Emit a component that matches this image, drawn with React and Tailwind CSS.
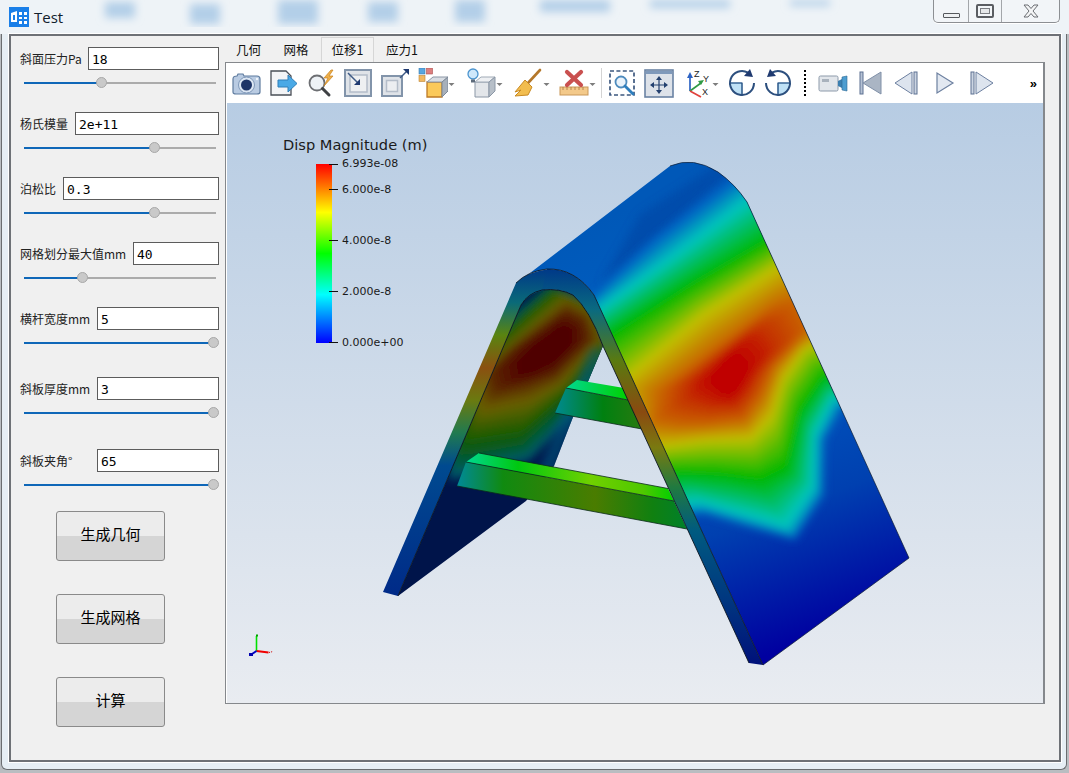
import React from 'react';

const sliders = [
  { label: '斜面压力Pa', value: '18', input: 'w-[131px]', fill: 'w-[77px]', mt: 'mt-[11px]' },
  { label: '杨氏模量', value: '2e+11', input: 'w-[144px]', fill: 'w-[130px]', mt: 'mt-[24px]' },
  { label: '泊松比', value: '0.3', input: 'w-[156px]', fill: 'w-[130px]', mt: 'mt-[24px]' },
  { label: '网格划分最大值mm', value: '40', input: 'w-[86px]', fill: 'w-[58px]', mt: 'mt-[24px]' },
  { label: '横杆宽度mm', value: '5', input: 'w-[122px]', fill: 'w-[189px]', mt: 'mt-[24px]' },
  { label: '斜板厚度mm', value: '3', input: 'w-[122px]', fill: 'w-[189px]', mt: 'mt-[29px]' },
  { label: '斜板夹角°', value: '65', input: 'w-[122px]', fill: 'w-[189px]', mt: 'mt-[31px]' },
];

// contour polygons of the displacement field, outermost first; same point count so they can be blended
const outerContours = [
  { color: [0, 96, 196], pts: [[575, 312], [655, 238], [728, 182], [790, 150], [905, 395], [845, 405], [825, 440], [824, 495], [795, 540], [752, 528], [705, 514], [650, 520]] },
  { color: [0, 196, 188], pts: [[580, 322], [672, 255], [742, 202], [790, 170], [890, 410], [833, 400], [815, 437], [814, 488], [787, 528], [752, 518], [700, 503], [650, 510]] },
  { color: [0, 184, 0], pts: [[590, 345], [690, 283], [763, 241], [800, 220], [870, 395], [826, 376], [801, 413], [787, 471], [760, 482], [721, 476], [682, 474], [640, 480]] },
  { color: [192, 192, 0], pts: [[615, 385], [703, 312], [777, 265], [810, 245], [840, 335], [805, 349], [784, 380], [773, 417], [752, 440], [703, 442], [668, 447], [630, 450]] },
  { color: [200, 96, 0], pts: [[660, 390], [720, 345], [775, 305], [795, 300], [810, 325], [795, 345], [775, 365], [762, 395], [745, 420], [705, 425], [680, 425], [655, 420]] },
  { color: [192, 0, 0], pts: [[710, 375], [722, 360], [731, 350], [740, 354], [750, 364], [748, 372], [744, 382], [738, 390], [730, 396], [722, 394], [716, 388], [710, 382]] },
];

const innerContours = [
  { color: [0, 90, 112], pts: [[505, 320], [550, 283], [600, 300], [615, 350], [580, 410], [530, 460], [450, 480], [440, 400]] },
  { color: [10, 90, 8], pts: [[505, 330], [552, 288], [595, 305], [606, 350], [570, 395], [520, 440], [462, 448], [455, 390]] },
  { color: [106, 96, 0], pts: [[500, 355], [566, 298], [590, 310], [603, 338], [560, 385], [530, 402], [482, 412], [470, 385]] },
  { color: [90, 38, 0], pts: [[515, 345], [566, 310], [585, 320], [590, 340], [555, 375], [525, 385], [495, 392], [490, 370]] },
  { color: [80, 0, 0], pts: [[535, 345], [560, 325], [572, 330], [570, 345], [555, 362], [535, 372], [522, 375], [520, 360]] },
];

const blendContours = (levels, steps) => {
  const out = [];
  for (let i = 0; i < levels.length - 1; i++) {
    for (let s = 0; s < steps; s++) {
      const t = s / steps;
      const mix = (a, b) => a + (b - a) * t;
      const d = levels[i].pts.map((p, k) => `${mix(p[0], levels[i + 1].pts[k][0]).toFixed(1)} ${mix(p[1], levels[i + 1].pts[k][1]).toFixed(1)}`).join('L');
      const c = levels[i].color.map((v, k) => Math.round(mix(v, levels[i + 1].color[k])));
      out.push({ d: `M${d}z`, fill: `rgb(${c.join(',')})` });
    }
  }
  const last = levels[levels.length - 1];
  out.push({ d: `M${last.pts.map(p => p.join(' ')).join('L')}z`, fill: `rgb(${last.color.join(',')})` });
  return out;
};

const ContourFill = ({ levels, filter }) => (
  <g filter={filter}>
    {blendContours(levels, 8).map((l, i) => <path key={i} d={l.d} fill={l.fill} />)}
  </g>
);

const Drop = () => (
  <svg className="w-[7px] h-[30px] shrink-0" viewBox="0 0 7 30"><path d="M0.5 15h6l-3 3z" fill="#7d7d7d" /></svg>
);

const Icon = ({ children }) => (
  <svg className="w-[30px] h-[30px] shrink-0" viewBox="0 0 30 30">{children}</svg>
);

const ToolBtn = ({ w, drop, children }) => (
  <div className={`flex items-center justify-center shrink-0 h-full ${w}`}>
    <Icon>{children}</Icon>
    {drop && <Drop />}
  </div>
);

const Toolbar = () => (
  <div className="h-[40px] flex items-center bg-white pl-[1px]">
    <ToolBtn w="w-[37px]">
      <path d="M5 8l1-2h5l1 2h13q3 0 3 3v13q0 2-3 2H4q-3 0-3-2V11q0-3 4-3z" fill="#b9cbe2" stroke="#5f7c9f" strokeWidth="1.2" />
      <circle cx="14.5" cy="17" r="8" fill="#dbe6f3" stroke="#7f98b8" />
      <circle cx="14.5" cy="17" r="5.5" fill="#1d3568" />
      <circle cx="25" cy="11" r="1.2" fill="#eef4fa" />
    </ToolBtn>
    <ToolBtn w="w-[37px]">
      <path d="M2 3h15l5 5v19H2z" fill="#f3f4f6" stroke="#4a4f57" strokeWidth="1.3" />
      <path d="M9 12h10V7l9 8.5-9 8.5v-5H9z" fill="#4aa9e6" stroke="#2f7fb8" />
    </ToolBtn>
    <ToolBtn w="w-[37px]">
      <circle cx="11" cy="15" r="7.5" fill="#eef2f6" stroke="#6d6f73" strokeWidth="1.8" />
      <path d="M16.5 20.5l6.5 6.5" stroke="#3f4144" strokeWidth="3" strokeLinecap="round" />
      <path d="M25 2l-7 8h4l-4 8 9-10h-4l4-6z" fill="#efb04a" stroke="#c5801c" strokeWidth="0.7" />
    </ToolBtn>
    <ToolBtn w="w-[37px]">
      <rect x="2" y="2" width="26" height="26" fill="#dfe3e8" stroke="#8294aa" strokeWidth="2" />
      <rect x="7" y="7" width="17" height="17" fill="#eef0f2" stroke="#b4bdc9" strokeWidth="1.5" />
      <path d="M5 5l10 10" stroke="#3e5a86" strokeWidth="1.5" />
      <path d="M17 17v-6l-6 6z" fill="#1f3a70" />
    </ToolBtn>
    <ToolBtn w="w-[37px]">
      <rect x="2" y="8" width="20" height="20" fill="#dfe3e8" stroke="#8294aa" strokeWidth="2" />
      <rect x="6.5" y="12.5" width="11" height="11" fill="#eceef1" stroke="#b4bdc9" strokeWidth="1.5" />
      <path d="M20 10l7-7" stroke="#3e5a86" strokeWidth="1.5" />
      <path d="M29 1v6l-6-6z" fill="#1f3a70" />
    </ToolBtn>
    <ToolBtn w="w-[47px]" drop>
      <rect x="1" y="0" width="6" height="6" fill="#58a6e0" stroke="#3c7db0" strokeWidth="0.6" />
      <rect x="8.5" y="0" width="6" height="6" fill="#dc7f7f" stroke="#aa4f4f" strokeWidth="0.6" />
      <rect x="1" y="7.5" width="6" height="6" fill="#f2b860" stroke="#bc8434" strokeWidth="0.6" />
      <path d="M9 14h15v15H9z" fill="#fbc95a" stroke="#bd7a26" strokeWidth="1.3" />
      <path d="M9 14l6-5h15l-6 5z" fill="#d8dde3" stroke="#8b97a6" />
      <path d="M24 14l6-5v14l-6 6z" fill="#a7b0bb" stroke="#7d8998" />
    </ToolBtn>
    <ToolBtn w="w-[48px]" drop>
      <circle cx="7" cy="6" r="5" fill="#cfe8fb" stroke="#4b94cf" strokeWidth="1.3" />
      <path d="M5 11.5h4v3H5z" fill="#5e6c7c" />
      <path d="M9 14h14v15H9z" fill="#e3e6ea" stroke="#8b97a6" />
      <path d="M9 14l6-5h14l-6 5z" fill="#eef0f3" stroke="#a0aab6" />
      <path d="M23 14l6-5v14l-6 6z" fill="#b7bfc8" stroke="#8b97a6" />
    </ToolBtn>
    <ToolBtn w="w-[47px]" drop>
      <path d="M27 2L15 15" stroke="#b4772a" strokeWidth="2.6" strokeLinecap="round" />
      <path d="M12 12l7 7-4 8-13 1 6-6-6 2z" fill="#f2bd4f" stroke="#c88a24" />
    </ToolBtn>
    <ToolBtn w="w-[45px]" drop>
      <rect x="1" y="19" width="28" height="8" fill="#f3c98a" stroke="#c99759" />
      <path d="M4 19v3M8 19v3M12 19v3M16 19v3M20 19v3M24 19v3" stroke="#a97a3c" strokeWidth="0.8" />
      <path d="M8 4l14 13M22 4L8 17" stroke="#c9504f" strokeWidth="4.2" strokeLinecap="round" />
    </ToolBtn>
    <div className="w-px h-[30px] bg-[#d4d4d4] mx-[1px] shrink-0" />
    <ToolBtn w="w-[37px]">
      <rect x="3" y="3" width="24" height="24" fill="none" stroke="#3d587f" strokeWidth="1.7" strokeDasharray="4 2.4" />
      <circle cx="14" cy="14" r="5.5" fill="#eaf3fb" stroke="#4e8bbd" strokeWidth="1.8" />
      <path d="M18 18l8 8" stroke="#2f7ebd" strokeWidth="2.8" strokeLinecap="round" />
    </ToolBtn>
    <ToolBtn w="w-[37px]">
      <rect x="1" y="2" width="28" height="27" fill="#dde2e9" stroke="#6a83a3" strokeWidth="1.6" />
      <rect x="2" y="3" width="26" height="3" fill="#7f99ba" />
      <path d="M15 10v14M8 17h14" stroke="#23406e" strokeWidth="1.2" />
      <path d="M15 8l-3 4h6zM15 26l-3-4h6zM6 17l4-3v6zM24 17l-4-3v6z" fill="#23406e" />
    </ToolBtn>
    <ToolBtn w="w-[47px]" drop>
      <path d="M8 23V8" stroke="#2d63c4" strokeWidth="1.7" />
      <path d="M8 4l-3 6h6z" fill="#2d63c4" />
      <path d="M8 23l11-8" stroke="#2f9a45" strokeWidth="1.7" />
      <path d="M22 12l-6 1 3 4z" fill="#2f9a45" />
      <path d="M8 23l11 6" stroke="#e0413c" strokeWidth="1.7" />
      <text x="12" y="9" fontSize="9" fontFamily="'Liberation Sans', sans-serif" fill="#222">Z</text>
      <text x="21" y="14" fontSize="9" fontFamily="'Liberation Sans', sans-serif" fill="#222">Y</text>
      <text x="20" y="27" fontSize="9" fontFamily="'Liberation Sans', sans-serif" fill="#222">X</text>
    </ToolBtn>
    <ToolBtn w="w-[36px]">
      <path d="M15 15h-12a12 12 0 0 0 12 12z" fill="#bfe1f6" stroke="#4f93c6" />
      <path d="M3 15h12v12" fill="none" stroke="#2c4f7e" strokeWidth="1.2" />
      <path d="M21 4.6A12 12 0 1 0 27 15" fill="none" stroke="#2c4f7e" strokeWidth="2" />
      <path d="M26 9l-9-1 6-7z" fill="#1f3a70" />
    </ToolBtn>
    <ToolBtn w="w-[36px]">
      <path d="M15 15h12a12 12 0 0 1-12 12z" fill="#bfe1f6" stroke="#4f93c6" />
      <path d="M27 15H15v12" fill="none" stroke="#2c4f7e" strokeWidth="1.2" />
      <path d="M9 4.6A12 12 0 1 1 3 15" fill="none" stroke="#2c4f7e" strokeWidth="2" />
      <path d="M4 9l9-1-6-7z" fill="#1f3a70" />
    </ToolBtn>
    <div className="w-[18px] h-[26px] flex justify-start shrink-0 pl-[8px]">
      <div className="h-full border-l-2 border-dotted border-black" />
    </div>
    <ToolBtn w="w-[37px]">
      <rect x="1" y="8" width="19" height="15" rx="1.5" fill="#e2e6eb" stroke="#8d9aaa" />
      <rect x="4" y="11" width="7" height="3" fill="#a9b2bd" />
      <path d="M20 13l4-2v9l-4-2z" fill="#3b7fb0" />
      <path d="M24 9l5-1v15l-5-1z" fill="#4d9dd0" stroke="#2c6a96" strokeWidth="0.6" />
    </ToolBtn>
    <ToolBtn w="w-[37px]">
      <rect x="5" y="4" width="3" height="22" fill="#b6c2d4" stroke="#5d7092" />
      <path d="M26 4v22L8 15z" fill="#aab5c4" stroke="#8090a8" />
    </ToolBtn>
    <ToolBtn w="w-[37px]">
      <rect x="22" y="4" width="3" height="22" fill="#ccd5e2" stroke="#5d7092" />
      <path d="M20 4v22L3 15z" fill="#dde4ee" stroke="#6d80a0" />
    </ToolBtn>
    <ToolBtn w="w-[37px]">
      <path d="M8 5v20l16-10z" fill="#e2e8f1" stroke="#6d80a0" strokeWidth="1.2" />
    </ToolBtn>
    <ToolBtn w="w-[37px]">
      <rect x="5" y="4" width="3" height="22" fill="#ccd5e2" stroke="#5d7092" />
      <path d="M10 4v22l17-11z" fill="#dde4ee" stroke="#6d80a0" />
    </ToolBtn>
    <span className="ml-auto mr-[6px] text-[13px] leading-none font-bold text-black font-['Liberation_Sans',sans-serif]">»</span>
  </div>
);

const Scene = () => (
  <svg className="block w-[816px] h-[600px]" viewBox="227 103 816 600">
    <defs>
      <linearGradient id="bgGrad" x1="0" y1="0" x2="0" y2="1">
        <stop offset="0" stopColor="#b7cce3" />
        <stop offset="1" stopColor="#e9ecf1" />
      </linearGradient>
      <linearGradient id="barGrad" x1="0" y1="1" x2="0" y2="0">
        <stop offset="0" stopColor="#0000ff" />
        <stop offset="0.27" stopColor="#00ffff" />
        <stop offset="0.5" stopColor="#00ff00" />
        <stop offset="0.73" stopColor="#ffff00" />
        <stop offset="1" stopColor="#ff0000" />
      </linearGradient>
      <linearGradient id="legL" gradientUnits="userSpaceOnUse" x1="0" y1="270" x2="0" y2="596">
        <stop offset="0" stopColor="#003a88" />
        <stop offset="0.1" stopColor="#0a6a78" />
        <stop offset="0.2" stopColor="#5a8410" />
        <stop offset="0.3" stopColor="#8a5010" />
        <stop offset="0.4" stopColor="#6a7a10" />
        <stop offset="0.5" stopColor="#207a50" />
        <stop offset="0.6" stopColor="#004a90" />
        <stop offset="1" stopColor="#002a88" />
      </linearGradient>
      <linearGradient id="legR" gradientUnits="userSpaceOnUse" x1="0" y1="270" x2="0" y2="665">
        <stop offset="0" stopColor="#003a88" />
        <stop offset="0.1" stopColor="#0a6a80" />
        <stop offset="0.23" stopColor="#5a7a10" />
        <stop offset="0.36" stopColor="#8a4a10" />
        <stop offset="0.45" stopColor="#7a7a10" />
        <stop offset="0.55" stopColor="#207a40" />
        <stop offset="0.66" stopColor="#005a80" />
        <stop offset="0.82" stopColor="#003a80" />
        <stop offset="1" stopColor="#00107a" />
      </linearGradient>
      <linearGradient id="bar1Top" gradientUnits="userSpaceOnUse" x1="466" y1="0" x2="674" y2="0">
        <stop offset="0" stopColor="#00d890" />
        <stop offset="0.25" stopColor="#00c810" />
        <stop offset="0.6" stopColor="#70d000" />
        <stop offset="0.85" stopColor="#50c800" />
        <stop offset="1" stopColor="#00d000" />
      </linearGradient>
      <linearGradient id="bar1Front" gradientUnits="userSpaceOnUse" x1="457" y1="0" x2="687" y2="0">
        <stop offset="0" stopColor="#008a98" />
        <stop offset="0.2" stopColor="#108a10" />
        <stop offset="0.6" stopColor="#4a7c00" />
        <stop offset="0.85" stopColor="#108010" />
        <stop offset="1" stopColor="#00802a" />
      </linearGradient>
      <linearGradient id="bar2Top" gradientUnits="userSpaceOnUse" x1="566" y1="0" x2="628" y2="0">
        <stop offset="0" stopColor="#00d890" />
        <stop offset="1" stopColor="#00d000" />
      </linearGradient>
      <linearGradient id="bar2Front" gradientUnits="userSpaceOnUse" x1="555" y1="0" x2="642" y2="0">
        <stop offset="0" stopColor="#008a90" />
        <stop offset="0.55" stopColor="#008010" />
        <stop offset="1" stopColor="#287a10" />
      </linearGradient>
      <linearGradient id="baseTop" gradientUnits="userSpaceOnUse" x1="650" y1="200" x2="810" y2="640">
        <stop offset="0" stopColor="#0058b8" />
        <stop offset="0.35" stopColor="#0060c4" />
        <stop offset="0.72" stopColor="#0040b0" />
        <stop offset="1" stopColor="#0000a0" />
      </linearGradient>
      <filter id="contourBlur" x="-20%" y="-20%" width="140%" height="140%"><feGaussianBlur stdDeviation="4" /></filter>
      <filter id="soft" x="-20%" y="-20%" width="140%" height="140%"><feGaussianBlur stdDeviation="5" /></filter>
      <clipPath id="topClip">
        <path d="M530 273L670 166Q693 156 718 172Q735 184 747 202L909 558L763 665L594 295Q575 268 547 269z" />
      </clipPath>
      <clipPath id="innerClip">
        <path d="M521 305Q528 293 542 290Q560 288 573 295Q590 310 603 346L573 417L554 466L526 501L398 596z" />
      </clipPath>
    </defs>

    <rect x="227" y="103" width="816" height="600" fill="url(#bgGrad)" />

    {/* scalar bar */}
    <text x="283" y="149.5" fontSize="14.6" fill="#1a1a1a" fontFamily="'DejaVu Sans', sans-serif">Disp Magnitude (m)</text>
    <rect x="316" y="164" width="16" height="179" fill="url(#barGrad)" />
    <g stroke="#111" strokeWidth="1">
      <path d="M329 164.5h9M329 189.5h9M329 240.5h9M329 291.5h9M329 342.5h9" />
    </g>
    <g fontSize="11" fill="#1a1a1a" fontFamily="'DejaVu Sans', sans-serif">
      <text x="342" y="167">6.993e-08</text>
      <text x="342" y="193">6.000e-8</text>
      <text x="342" y="244">4.000e-8</text>
      <text x="342" y="295">2.000e-8</text>
      <text x="342" y="346">0.000e+00</text>
    </g>

    {/* axes */}
    <path d="M256.5 651V636" stroke="#00e000" strokeWidth="1.6" />
    <path d="M257 634.5v2" stroke="#00a000" strokeWidth="2" />
    <path d="M256.5 651l12 1.5" stroke="#f00000" strokeWidth="2" />
    <path d="M269 652.5l4-1" stroke="#d00000" strokeWidth="1" strokeDasharray="1 1" />
    <path d="M256.5 651l-6 4" stroke="#0000c0" strokeWidth="2" />
    <rect x="249" y="653" width="4" height="3" fill="#0000b0" />

    {/* inner face */}
    <path d="M521 305Q528 293 542 290Q560 288 573 295Q590 310 603 346L573 417L554 466L526 501L398 596z" fill="#00144a" />
    <g clipPath="url(#innerClip)">
      <ContourFill levels={innerContours} filter="url(#contourBlur)" />
      <path d="M603 346L590 350L560 420L530 490L545 490L575 425z" fill="#005a80" filter="url(#soft)" opacity="0.6" />
    </g>

    {/* cross bars */}
    <path d="M566 388L577 380L624 388L628 400z" fill="url(#bar2Top)" />
    <path d="M566 388L628 400L642 429L555 413z" fill="url(#bar2Front)" />
    <path d="M566 388L628 400M555 413L642 429" stroke="#0a2a1a" strokeWidth="0.8" fill="none" />
    <path d="M466 462L479 453L668 488.5L674 501z" fill="url(#bar1Top)" />
    <path d="M466 462L674 501L687 529L457 486z" fill="url(#bar1Front)" />
    <path d="M466 462L674 501M457 486L687 529M479 453L668 488.5" stroke="#0a2a1a" strokeWidth="0.8" fill="none" />

    {/* top surface */}
    <path d="M530 273L670 166Q693 156 718 172Q735 184 747 202L909 558L763 665L594 295Q575 268 547 269z" fill="url(#baseTop)" />
    <g clipPath="url(#topClip)">
      <path d="M640 215L740 150L740 165L600 285z" fill="#004aa8" filter="url(#soft)" opacity="0.8" />
      <ContourFill levels={outerContours} filter="url(#contourBlur)" />
    </g>
    <path d="M670 166Q693 156 718 172Q735 184 747 202L909 558L763 665" fill="none" stroke="#0a1a30" strokeWidth="0.7" />

    {/* arch edge band */}
    <path d="M383 592L516 283Q528 271 550 269L545 290Q528 293 521 305L398 596z" fill="url(#legL)" />
    <path d="M547 269Q575 268 594 295L763 665L749 663L603 346Q590 310 573 295Q560 288 542 290z" fill="url(#legR)" />
    <path d="M398 596L521 305Q528 293 542 290Q560 288 573 295Q590 310 603 346L749 663" fill="none" stroke="#0a1420" strokeWidth="0.9" />
    <path d="M594 295L763 665M516 283Q528 271 547 269Q575 268 594 295" fill="none" stroke="#0a1420" strokeWidth="0.8" />
  </svg>
);

const WinBtn = ({ className, children }) => (
  <div className={`flex items-center justify-center ${className}`}>{children}</div>
);

export default function App() {
  return (
    <div className="w-[1069px] h-[773px] overflow-hidden relative bg-[#b9bdc1] font-['Noto_Sans_CJK_SC',sans-serif] text-[#111]">
      {/* outer aero window */}
      <div className="ml-[1px] w-[1066px] h-[770px] border-x border-b border-[#6a6d70] rounded-b-[6px] bg-[#e6eef4]">
        {/* blurred desktop behind the aero frame */}
        <div className="absolute left-0 top-0 w-full h-[34px] bg-[#eef3f7]" />
        <svg className="absolute left-0 top-0 w-[1069px] h-[34px]" viewBox="0 0 1069 34">
          <defs><filter id="titleBlur"><feGaussianBlur stdDeviation="4" /></filter></defs>
          <g fill="#b3cfe8" filter="url(#titleBlur)">
            <rect x="105" y="2" width="30" height="16" />
            <rect x="190" y="4" width="30" height="20" />
            <rect x="278" y="0" width="40" height="24" />
            <rect x="368" y="2" width="30" height="20" />
            <rect x="455" y="0" width="30" height="22" />
            <rect x="540" y="0" width="70" height="12" />
            <rect x="650" y="0" width="80" height="8" />
            <rect x="790" y="0" width="40" height="6" />
          </g>
        </svg>

        {/* title bar */}
        <div className="relative h-[34px] flex items-start pl-[7px] pr-[6px]">
          <svg className="w-[20px] h-[20px] mt-[7px] shrink-0" viewBox="0 0 20 20">
            <rect width="20" height="20" fill="#1a7fe8" />
            <path d="M2 6l6-2v11H2zM10 5h8v3h-8zM10 10h8v2h-8zM10 14h8v3h-8z" fill="#fff" />
            <path d="M4 8h2v5H4zM13 5h2v12h-2z" fill="#1a7fe8" />
          </svg>
          <span className="ml-[5px] mt-[7px] text-[15px] leading-[20px] text-[#10202c] font-['Open_Sans',sans-serif]">Test</span>
          <div className="ml-auto w-[127px] h-[23px] flex bg-[#f2f5f8] border border-t-0 border-[#8c8f93] rounded-b-[5px] shadow-[0_1px_0_#fff]">
            <WinBtn className="w-[35px] border-r border-[#a3a6aa] items-end pb-[4px]">
              <div className="w-[17px] h-[5px] bg-[#eef0f2] border border-[#55585c] rounded-[1px]" />
            </WinBtn>
            <WinBtn className="w-[33px] border-r border-[#a3a6aa]">
              <div className="w-[18px] h-[14px] border-2 border-[#5a5d62] rounded-[2px] flex items-center justify-center">
                <div className="w-[10px] h-[6px] bg-[#e6e8ea] border border-[#7a7d82]" />
              </div>
            </WinBtn>
            <WinBtn className="flex-1">
              <svg className="w-[16px] h-[14px]" viewBox="0 0 16 14">
                <path d="M1 1h4l3 3.5L11 1h4l-5 6 5 6h-4L8 9.5 5 13H1l5-6z" fill="#f4f5f6" stroke="#6a6d72" />
              </svg>
            </WinBtn>
          </div>
        </div>

        {/* window content */}
        <div className="relative ml-[7px] w-[1052px] h-[728px] border-2 border-[#6e7176] outline outline-1 outline-white bg-[#f0f0f0] flex">
          {/* parameters */}
          <div className="w-[214px] shrink-0 flex flex-col">
            {sliders.map(s => (
              <div key={s.label} className={`${s.mt} pl-[9px] pr-[6px]`}>
                <div className="h-[23px] flex items-center justify-between">
                  <label className="text-[12px] leading-none whitespace-nowrap text-[#222]">{s.label}</label>
                  <input
                    readOnly
                    value={s.value}
                    className={`${s.input} shrink-0 h-[23px] bg-white border border-[#5c5c5c] px-[3px] pt-[1px] text-[13px] font-['DejaVu_Sans_Mono',monospace] text-black outline-none`}
                  />
                </div>
                <div className="mt-[7px] ml-[4px] mr-[3px] h-[11px] flex items-center">
                  <div className={`h-[2px] shrink-0 bg-[#0f67b8] ${s.fill}`} />
                  <div className="w-[11px] h-[11px] shrink-0 -mx-[5px] rounded-full bg-[#c9c9c9] border border-[#a8a8a8] z-10" />
                  <div className="h-[2px] flex-1 bg-[#ababab]" />
                </div>
              </div>
            ))}
            <div className="mt-[21px] pl-[45px] flex flex-col gap-[33px]">
              {['生成几何', '生成网格', '计算'].map(t => (
                <button key={t} className="w-[109px] h-[50px] rounded-[3px] border border-[#8a8a8a] bg-[linear-gradient(#ececec_0,#ececec_50%,#d5d5d5_50%,#d5d5d5_100%)] text-[15px] text-black pb-[3px]">
                  {t}
                </button>
              ))}
            </div>
          </div>

          {/* viewer */}
          <div className="flex-1 flex flex-col pt-[1px] min-w-0">
            <div className="h-[25px] flex items-end text-[12.5px] text-[#111] leading-none">
              <div className="w-[47px] text-center pb-[6px]">几何</div>
              <div className="w-[48px] text-center pb-[6px]">网格</div>
              <div className="ml-[1px] w-[53px] h-[25px] flex items-center justify-center bg-[#f2f2f2] border border-b-0 border-[#d6d6d6]">位移1</div>
              <div className="w-[56px] text-center pb-[6px]">应力1</div>
            </div>
            <div className="w-[820px] h-[642px] bg-white border border-[#85888c] border-r-2 flex flex-col pl-[1px]">
              <Toolbar />
              <Scene />
            </div>
          </div>
        </div>
      </div>
    </div>
  );
}
